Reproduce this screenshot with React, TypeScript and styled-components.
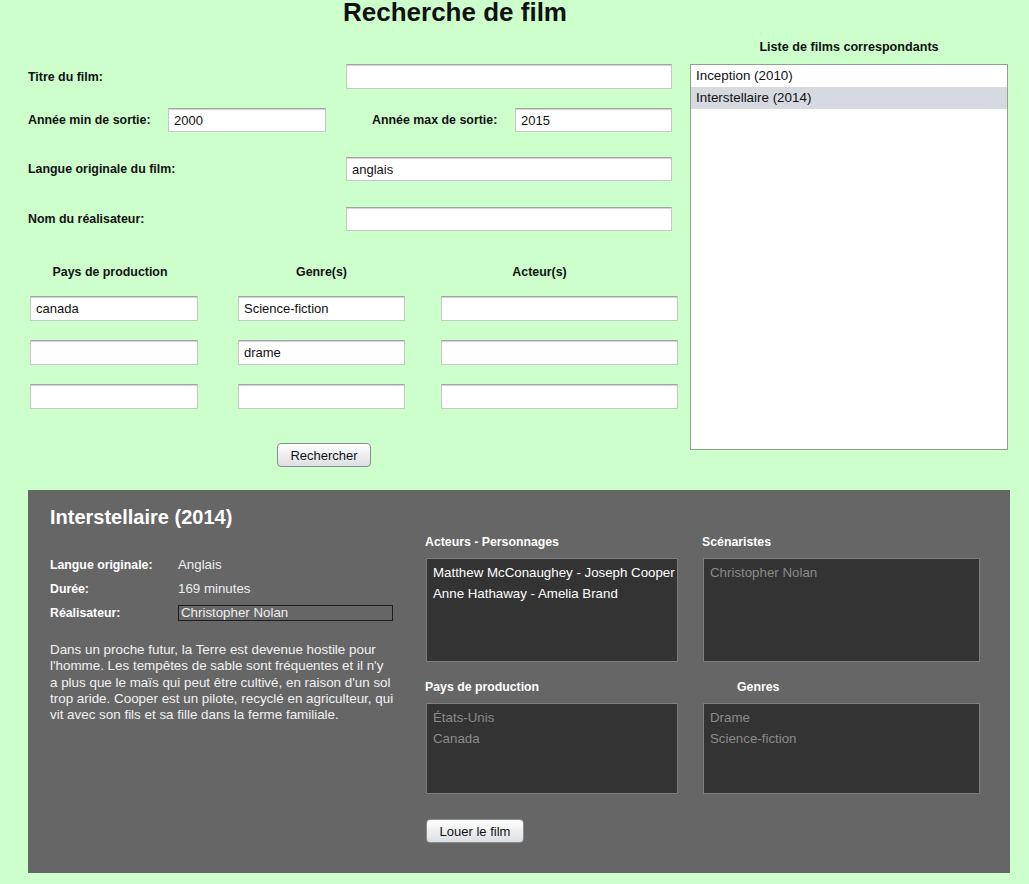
import styled, { createGlobalStyle } from 'styled-components'

const GlobalStyle = createGlobalStyle`
  html, body {
    margin: 0;
    padding: 0;
    background: #ccffcc;
    font-family: 'Liberation Sans', Arial, sans-serif;
    color: #111;
  }
  * {
    box-sizing: border-box;
  }
`

const Page = styled.div`
  width: 1029px;
  height: 884px;
  overflow: hidden;
  background: #ccffcc;
`

const PageTitle = styled.h1`
  margin: 0;
  width: 910px;
  height: 24px;
  font-size: 26px;
  line-height: 24px;
  font-weight: 700;
  text-align: center;
`

const Top = styled.div`
  display: flex;
  padding-left: 28px;
`

const Form = styled.form`
  display: flex;
  flex-direction: column;
  width: 662px;
  padding-top: 40px;
`

const Row = styled.div<{ $mt: number; $height?: number }>`
  display: flex;
  align-items: center;
  margin-top: ${(p) => p.$mt}px;
  height: ${(p) => p.$height ?? 25}px;
`

const FieldLabel = styled.label<{ $width: number; $ml?: number }>`
  flex: none;
  width: ${(p) => p.$width}px;
  margin-left: ${(p) => p.$ml ?? 0}px;
  font-size: 12.4px;
  font-weight: 700;
`

const TextInput = styled.input<{ $width: number }>`
  flex: none;
  width: ${(p) => p.$width}px;
  height: 100%;
  margin: 0;
  padding: 0 5px;
  border: 1px solid #c4c9c4;
  border-top-color: #a3a3a3;
  box-shadow: inset 0 1px 1px rgba(0, 0, 0, 0.18);
  background: #fff;
  font-family: 'Liberation Sans', Arial, sans-serif;
  font-size: 13px;
  color: #111;
  outline: none;
`

const Columns = styled.div`
  display: flex;
  margin-top: 34px;
`

const Column = styled.div<{ $width: number; $ml: number }>`
  display: flex;
  flex-direction: column;
  width: ${(p) => p.$width}px;
  margin-left: ${(p) => p.$ml}px;
  gap: 19px;
`

const ColumnHeader = styled.div<{ $shift?: number }>`
  height: 14px;
  line-height: 14px;
  margin-bottom: -2px;
  padding-right: ${(p) => p.$shift ?? 0}px;
  text-align: center;
  font-size: 12.4px;
  font-weight: 700;
`

const GridInput = styled(TextInput)`
  width: 100%;
  height: 25px;
`

const Button = styled.button<{ $width: number }>`
  width: ${(p) => p.$width}px;
  height: 24px;
  padding: 0;
  border: 1px solid #8b8b8b;
  border-radius: 4px;
  background: linear-gradient(#ffffff, #dcdfe3);
  font-family: 'Liberation Sans', Arial, sans-serif;
  font-size: 13px;
  color: #111;
`

const SearchButton = styled(Button)`
  margin: 34px 0 0 249px;
`

const Results = styled.aside`
  display: flex;
  flex-direction: column;
  width: 318px;
  padding-top: 16px;
`

const ResultsHeader = styled.div`
  height: 14px;
  line-height: 14px;
  margin-bottom: 10px;
  text-align: center;
  font-size: 12.6px;
  font-weight: 700;
`

const ResultsList = styled.ul`
  margin: 0;
  padding: 0;
  list-style: none;
  height: 386px;
  border: 1px solid #8fa08f;
  background: #fff;
`

const ResultItem = styled.li<{ $selected?: boolean }>`
  height: 22px;
  line-height: 22px;
  padding-left: 5px;
  font-size: 13.4px;
  background: ${(p) => (p.$selected ? '#d6d9df' : 'transparent')};
`

const Details = styled.section`
  display: grid;
  grid-template-columns: 375px 1fr;
  width: 982px;
  height: 383px;
  margin: 23px 0 0 28px;
  padding-left: 22px;
  background: #666666;
  color: #fff;
`

const Summary = styled.div`
  padding-top: 16px;
`

const FilmTitle = styled.h2`
  margin: 0;
  height: 22px;
  line-height: 22px;
  font-size: 20px;
  font-weight: 700;
`

const Facts = styled.dl`
  display: grid;
  grid-template-columns: 128px 1fr;
  grid-auto-rows: 21px;
  row-gap: 3px;
  align-items: center;
  margin: 26px 0 0;
`

const FactLabel = styled.dt`
  font-size: 12.3px;
  font-weight: 700;
`

const FactValue = styled.dd`
  margin: 0;
  font-size: 13.3px;
  color: #eeeeee;
`

const FactBox = styled(FactValue)`
  width: 215px;
  height: 16px;
  line-height: 14px;
  padding-left: 2px;
  border: 1px solid #1e1e1e;
`

const Synopsis = styled.p`
  width: 360px;
  margin: 19px 0 0;
  font-size: 13.4px;
  line-height: 16.3px;
  color: #f2f2f2;
`

const Credits = styled.div`
  display: grid;
  grid-template-columns: 253px 278px;
  column-gap: 24px;
  align-content: start;
  padding-top: 45px;
`

const CreditBlock = styled.div<{ $mt?: number }>`
  display: flex;
  flex-direction: column;
  margin-top: ${(p) => p.$mt ?? 0}px;
`

const CreditLabel = styled.div<{ $indent?: number }>`
  height: 14px;
  line-height: 14px;
  margin-bottom: 9px;
  padding-left: ${(p) => p.$indent ?? 0}px;
  font-size: 12.3px;
  font-weight: 700;
`

const CreditList = styled.ul<{ $height: number; $muted?: boolean }>`
  margin: 0 0 0 1px;
  padding: 3px 0 0 6px;
  list-style: none;
  height: ${(p) => p.$height}px;
  border: 1px solid #7e7e7e;
  background: #333333;
  color: ${(p) => (p.$muted ? '#8a8a8a' : '#ffffff')};
  font-size: 13.3px;
  line-height: 21px;
  white-space: nowrap;
`

const RentButton = styled(Button)`
  margin: 25px 0 0 1px;
`

const films = [
  { title: 'Inception (2010)', selected: false },
  { title: 'Interstellaire (2014)', selected: true },
]

const synopsisLines = [
  'Dans un proche futur, la Terre est devenue hostile pour',
  "l'homme. Les tempêtes de sable sont fréquentes et il n'y",
  "a plus que le maïs qui peut être cultivé, en raison d'un sol",
  'trop aride. Cooper est un pilote, recyclé en agriculteur, qui',
  'vit avec son fils et sa fille dans la ferme familiale.',
]

export default function App() {
  return (
    <Page>
      <GlobalStyle />
      <PageTitle>Recherche de film</PageTitle>
      <Top>
        <Form onSubmit={(e) => e.preventDefault()}>
          <Row $mt={0}>
            <FieldLabel $width={318}>Titre du film:</FieldLabel>
            <TextInput $width={326} defaultValue="" />
          </Row>
          <Row $mt={19} $height={24}>
            <FieldLabel $width={140}>Année min de sortie:</FieldLabel>
            <TextInput $width={158} defaultValue="2000" />
            <FieldLabel $width={143} $ml={46}>
              Année max de sortie:
            </FieldLabel>
            <TextInput $width={157} defaultValue="2015" />
          </Row>
          <Row $mt={25} $height={24}>
            <FieldLabel $width={318}>Langue originale du film:</FieldLabel>
            <TextInput $width={326} defaultValue="anglais" />
          </Row>
          <Row $mt={26} $height={24}>
            <FieldLabel $width={318}>Nom du réalisateur:</FieldLabel>
            <TextInput $width={326} defaultValue="" />
          </Row>
          <Columns>
            <Column $width={168} $ml={2}>
              <ColumnHeader $shift={8}>Pays de production</ColumnHeader>
              <GridInput $width={168} defaultValue="canada" />
              <GridInput $width={168} defaultValue="" />
              <GridInput $width={168} defaultValue="" />
            </Column>
            <Column $width={167} $ml={40}>
              <ColumnHeader>Genre(s)</ColumnHeader>
              <GridInput $width={167} defaultValue="Science-fiction" />
              <GridInput $width={167} defaultValue="drame" />
              <GridInput $width={167} defaultValue="" />
            </Column>
            <Column $width={237} $ml={36}>
              <ColumnHeader $shift={40}>Acteur(s)</ColumnHeader>
              <GridInput $width={237} defaultValue="" />
              <GridInput $width={237} defaultValue="" />
              <GridInput $width={237} defaultValue="" />
            </Column>
          </Columns>
          <SearchButton $width={94} type="submit">
            Rechercher
          </SearchButton>
        </Form>
        <Results>
          <ResultsHeader>Liste de films correspondants</ResultsHeader>
          <ResultsList>
            {films.map((film) => (
              <ResultItem key={film.title} $selected={film.selected}>
                {film.title}
              </ResultItem>
            ))}
          </ResultsList>
        </Results>
      </Top>
      <Details>
        <Summary>
          <FilmTitle>Interstellaire (2014)</FilmTitle>
          <Facts>
            <FactLabel>Langue originale:</FactLabel>
            <FactValue>Anglais</FactValue>
            <FactLabel>Durée:</FactLabel>
            <FactValue>169 minutes</FactValue>
            <FactLabel>Réalisateur:</FactLabel>
            <FactBox>Christopher Nolan</FactBox>
          </Facts>
          <Synopsis>
            {synopsisLines.map((line, i) => (
              <span key={i}>
                {line}
                {i < synopsisLines.length - 1 && <br />}
              </span>
            ))}
          </Synopsis>
        </Summary>
        <Credits>
          <CreditBlock>
            <CreditLabel>Acteurs - Personnages</CreditLabel>
            <CreditList $height={104}>
              <li>Matthew McConaughey - Joseph Cooper</li>
              <li>Anne Hathaway - Amelia Brand</li>
            </CreditList>
          </CreditBlock>
          <CreditBlock>
            <CreditLabel>Scénaristes</CreditLabel>
            <CreditList $height={104} $muted>
              <li>Christopher Nolan</li>
            </CreditList>
          </CreditBlock>
          <CreditBlock $mt={18}>
            <CreditLabel>Pays de production</CreditLabel>
            <CreditList $height={91} $muted>
              <li>États-Unis</li>
              <li>Canada</li>
            </CreditList>
          </CreditBlock>
          <CreditBlock $mt={18}>
            <CreditLabel $indent={35}>Genres</CreditLabel>
            <CreditList $height={91} $muted>
              <li>Drame</li>
              <li>Science-fiction</li>
            </CreditList>
          </CreditBlock>
          <RentButton $width={98}>Louer le film</RentButton>
        </Credits>
      </Details>
    </Page>
  )
}
